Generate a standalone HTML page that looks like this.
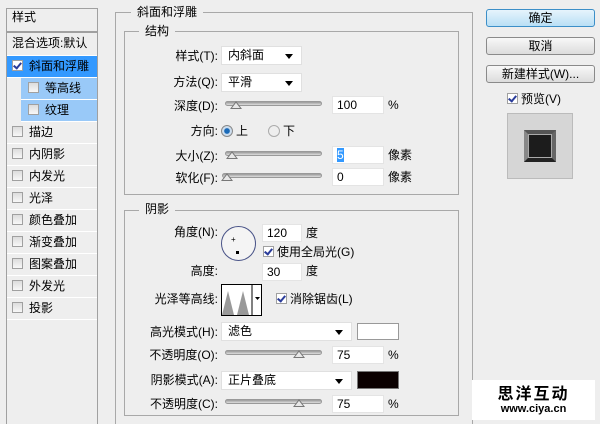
<!DOCTYPE html>
<html><head><meta charset="utf-8"><style>
*{margin:0;padding:0;box-sizing:border-box}
html{width:600px;height:424px;overflow:hidden}
body{width:600px;height:424px;background:#eeeeee;position:relative;overflow:hidden;font-family:"Liberation Sans","Noto Sans CJK SC","WenQuanYi Zen Hei",sans-serif;font-size:12px;color:#000}
.a{position:absolute;white-space:nowrap;line-height:14px}
.lp{position:absolute;left:6px;top:8px;width:92px;height:420px;border:1px solid #a0a0a0;background:#eeeeee}
.row{position:absolute;left:0;width:90px;height:22px;border-bottom:1px solid #fff;padding-left:5px;line-height:21px}
.cb{display:inline-block;width:11px;height:11px;border:1px solid #a0a0a0;background:linear-gradient(#ddd,#f8f8f8);vertical-align:-1px;margin-right:6px;position:relative}
.cb.on::after{content:"";position:absolute;left:2px;top:0px;width:3px;height:6px;border:solid #2a3c9a;border-width:0 2px 2px 0;transform:rotate(40deg)}
.box{position:absolute;border:1px solid #a8a8a8}
.leg{position:absolute;background:#eeeeee;padding:0 6px;line-height:14px}
.dd{position:absolute;background:#fff;border:1px solid #e0e0e0;height:19px;line-height:17px;padding-left:6px}
.dd::after{content:"";position:absolute;right:8px;top:7px;border:4px solid transparent;border-top:5px solid #000}
.in{position:absolute;background:#fff;border:1px solid #e4e4e4;height:18px;line-height:16px;padding-left:4px}
.sl{position:absolute;height:5px;border-radius:3px;background:linear-gradient(#999,#ddd);border:1px solid #999}
.th{position:absolute;width:12px;height:8px;top:-1px}
.lb{position:absolute;text-align:right;white-space:nowrap;line-height:14px}
.btn{position:absolute;left:486px;width:109px;height:18px;border:1px solid #8a8a8a;border-radius:3px;background:linear-gradient(#f8f8f8,#dcdcdc);text-align:center;line-height:16px}
</style></head><body>
<div class="lp">
 <div class="row" style="top:0;height:24px;line-height:17px;border-bottom:2px solid #a0a0a0">样式</div>
 <div class="row" style="top:25px;line-height:18px">混合选项:默认</div>
 <div class="row" style="top:47px;background:#3399ff"><span class="cb on" style="background:#fff"></span>斜面和浮雕</div>
 <div class="row" style="top:69px;left:14px;width:76px;background:#99c9f8"><span class="cb" style="margin-left:2px"></span>等高线</div>
 <div class="row" style="top:91px;left:14px;width:76px;background:#99c9f8"><span class="cb" style="margin-left:2px"></span>纹理</div>
 <div class="row" style="top:113px"><span class="cb"></span>描边</div>
 <div class="row" style="top:135px"><span class="cb"></span>内阴影</div>
 <div class="row" style="top:157px"><span class="cb"></span>内发光</div>
 <div class="row" style="top:179px"><span class="cb"></span>光泽</div>
 <div class="row" style="top:201px"><span class="cb"></span>颜色叠加</div>
 <div class="row" style="top:223px"><span class="cb"></span>渐变叠加</div>
 <div class="row" style="top:245px"><span class="cb"></span>图案叠加</div>
 <div class="row" style="top:267px"><span class="cb"></span>外发光</div>
 <div class="row" style="top:289px"><span class="cb"></span>投影</div>
</div>

<div class="box" style="left:115px;top:12px;width:358px;height:420px"></div>
<div class="leg" style="left:131px;top:5px">斜面和浮雕</div>
<div class="box" style="left:124px;top:31px;width:335px;height:164px"></div>
<div class="leg" style="left:139px;top:24px">结构</div>

<div class="lb" style="right:382px;top:49px">样式(T):</div>
<div class="dd" style="left:221px;top:46px;width:81px">内斜面</div>
<div class="lb" style="right:382px;top:75px">方法(Q):</div>
<div class="dd" style="left:221px;top:73px;width:81px">平滑</div>
<div class="lb" style="right:382px;top:99px">深度(D):</div>
<div class="sl" style="left:225px;top:101px;width:97px"><svg class="th" style="left:4px" viewBox="0 0 12 8"><path d="M1 7.5L6 1L11 7.5Z" fill="#e8e8e8" stroke="#777"/></svg></div>
<div class="in" style="left:332px;top:96px;width:52px">100</div>
<div class="a" style="left:388px;top:98px">%</div>
<div class="lb" style="right:382px;top:124px">方向:</div>
<div class="a" style="left:221px;top:125px;width:12px;height:12px;border-radius:50%;border:1px solid #888;background:radial-gradient(#1a6ab8 35%,#cde 45%)"></div>
<div class="a" style="left:236px;top:124px">上</div>
<div class="a" style="left:268px;top:125px;width:12px;height:12px;border-radius:50%;border:1px solid #aaa;background:#eee"></div>
<div class="a" style="left:283px;top:124px">下</div>
<div class="lb" style="right:382px;top:149px">大小(Z):</div>
<div class="sl" style="left:225px;top:151px;width:97px"><svg class="th" style="left:0px" viewBox="0 0 12 8"><path d="M1 7.5L6 1L11 7.5Z" fill="#e8e8e8" stroke="#777"/></svg></div>
<div class="in" style="left:332px;top:146px;width:52px"><span style="background:#3399ff;color:#fff">5</span></div>
<div class="a" style="left:388px;top:148px">像素</div>
<div class="lb" style="right:382px;top:171px">软化(F):</div>
<div class="sl" style="left:222px;top:173px;width:100px"><svg class="th" style="left:-2px" viewBox="0 0 12 8"><path d="M1 7.5L6 1L11 7.5Z" fill="#e8e8e8" stroke="#777"/></svg></div>
<div class="in" style="left:332px;top:168px;width:52px">0</div>
<div class="a" style="left:388px;top:170px">像素</div>

<div class="box" style="left:124px;top:210px;width:335px;height:206px"></div>
<div class="leg" style="left:139px;top:202px">阴影</div>
<div class="lb" style="right:382px;top:225px">角度(N):</div>
<div class="a" style="left:221px;top:226px;width:35px;height:35px;border-radius:50%;border:1.5px solid #4a5488;background:#f4f4f4"></div>
<div class="a" style="left:236px;top:251px;width:3px;height:3px;background:#000"></div>
<div class="a" style="left:231px;top:236px;font-size:8px;line-height:8px">+</div>
<div class="in" style="left:262px;top:224px;width:40px">120</div>
<div class="a" style="left:306px;top:226px">度</div>
<div class="a" style="left:263px;top:245px"><span class="cb on" style="background:#fff;margin-right:3px"></span>使用全局光(G)</div>
<div class="lb" style="right:382px;top:264px">高度:</div>
<div class="in" style="left:262px;top:263px;width:40px">30</div>
<div class="a" style="left:306px;top:264px">度</div>
<div class="lb" style="right:382px;top:292px">光泽等高线:</div>
<div class="a" style="left:221px;top:284px;width:41px;height:32px;border:1px solid #000;background:#fff">
<svg width="39" height="30" style="position:absolute;left:0;top:0"><path d="M0 30L6 6L12 30L15 30L21 6L27 30Z" fill="#999"/><line x1="30" y1="0" x2="30" y2="30" stroke="#000"/><path d="M33 12h5l-2.5 3z" fill="#000"/></svg></div>
<div class="a" style="left:276px;top:292px"><span class="cb on" style="background:#fff;margin-right:3px"></span>消除锯齿(L)</div>
<div class="lb" style="right:382px;top:325px">高光模式(H):</div>
<div class="dd" style="left:221px;top:322px;width:131px">滤色</div>
<div class="a" style="left:357px;top:323px;width:42px;height:17px;border:1px solid #999;background:#fff"></div>
<div class="lb" style="right:382px;top:348px">不透明度(O):</div>
<div class="sl" style="left:225px;top:350px;width:97px"><svg class="th" style="left:67px" viewBox="0 0 12 8"><path d="M1 7.5L6 1L11 7.5Z" fill="#e8e8e8" stroke="#777"/></svg></div>
<div class="in" style="left:332px;top:346px;width:52px">75</div>
<div class="a" style="left:388px;top:348px">%</div>
<div class="lb" style="right:382px;top:373px">阴影模式(A):</div>
<div class="dd" style="left:221px;top:371px;width:131px">正片叠底</div>
<div class="a" style="left:357px;top:371px;width:42px;height:18px;background:#0a0000;border:1px solid #777"></div>
<div class="lb" style="right:382px;top:397px">不透明度(C):</div>
<div class="sl" style="left:225px;top:399px;width:97px"><svg class="th" style="left:67px" viewBox="0 0 12 8"><path d="M1 7.5L6 1L11 7.5Z" fill="#e8e8e8" stroke="#777"/></svg></div>
<div class="in" style="left:332px;top:395px;width:52px">75</div>
<div class="a" style="left:388px;top:397px">%</div>

<div class="btn" style="top:9px;border-color:#3c8fc8;background:linear-gradient(#e6f4fc,#b9dff5)">确定</div>
<div class="btn" style="top:37px">取消</div>
<div class="btn" style="top:65px">新建样式(W)...</div>
<div class="a" style="left:507px;top:92px"><span class="cb on" style="background:#fff;margin-right:3px"></span>预览(V)</div>
<div class="a" style="left:507px;top:113px;width:66px;height:66px;border:1px solid #bbb;background:#d6d6d6"></div>
<div class="a" style="left:524px;top:130px;width:32px;height:32px;background:#1a1a1a;border-top:4px solid #555;border-left:4px solid #888;border-right:4px solid #666;border-bottom:4px solid #222"></div>
<div class="a" style="left:528px;top:134px;width:24px;height:24px;background:#1c1c1c;border:1px solid #aaa"></div>

<div class="a" style="left:472px;top:380px;width:123px;height:40px;background:#fff"></div>
<div class="a" style="left:472px;top:386px;width:123px;text-align:center;font-size:16px;line-height:17px;font-weight:bold;letter-spacing:2px">思洋互动</div>
<div class="a" style="left:472px;top:403px;width:123px;text-align:center;font-size:11px;font-weight:bold;line-height:12px">www.ciya.cn</div>
</body></html>
